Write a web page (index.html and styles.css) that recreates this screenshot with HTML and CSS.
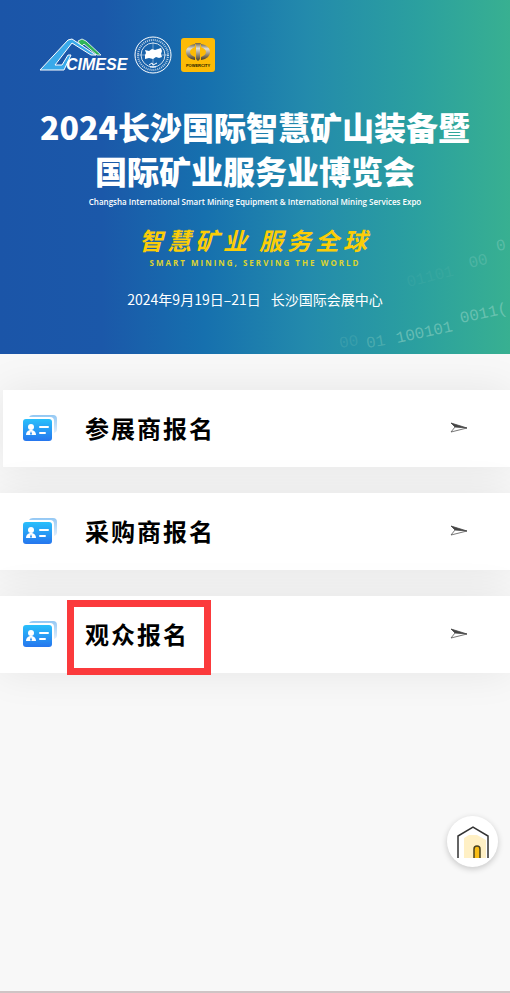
FILE: index.html
```
<!DOCTYPE html>
<html lang="zh-CN">
<head>
  <meta charset="UTF-8">
  <meta name="viewport" content="width=device-width, initial-scale=1.0">
  <title>2024长沙国际智慧矿山装备暨国际矿业服务业博览会</title>
  <link rel="stylesheet" href="styles.css">
</head>
<body>
  <header class="banner">
    <svg class="binary" viewBox="0 0 200 140" aria-hidden="true">
      <text transform="translate(30 134) rotate(-9)" opacity=".3">00</text>
      <text transform="translate(57 134) rotate(-9)" opacity=".6">01</text>
      <text transform="translate(87 129) rotate(-12)">100101</text>
      <text transform="translate(151 109) rotate(-12)">0011(</text>
      <text transform="translate(98 73) rotate(-14)" opacity=".15">01101</text>
      <text transform="translate(160 54) rotate(-14)" opacity=".5">00</text>
      <text transform="translate(187 37) rotate(-10)" opacity=".7">0</text>
    </svg>

    <div class="logos">
      <svg class="logo-cimese" viewBox="0 0 90 36" role="img" aria-label="CIMESE">
        <path d="M39 4l4-2 4 2 15 14h-4L45 7l-3 3z" fill="#2fb457" stroke="#fff" stroke-width=".8"/>
        <path d="M1 33L29 3l4-1 24 16h-5L33 6 16 28h7l6-10h3l-7 15z" fill="#39a9ea" stroke="#fff" stroke-width="1"/>
        <text x="27" y="33">CIMESE</text>
      </svg>
      <svg class="logo-seal" viewBox="0 0 38 38" role="img" aria-label="Seal">
        <g fill="none" stroke="#fff">
          <circle cx="19" cy="19" r="18" stroke-width="1"/>
          <circle cx="19" cy="19" r="15" stroke-width="2" stroke-dasharray="1 1" opacity=".7"/>
          <circle cx="19" cy="19" r="12" stroke-width=".8"/>
          <path d="M3 19h32M19 6v26" stroke-width=".6" opacity=".7"/>
          <path d="M15 29l3-2 1 2 4-2M16 31h6" stroke-width="1"/>
        </g>
        <path d="M11 14l4 1 3-2 3 1 6-2 1 3-1 3 1 3-3 1-3-1-3 2-4-1-4 1v-4l1-2z" fill="#fff"/>
      </svg>
      <svg class="logo-power" viewBox="0 0 34 34" role="img" aria-label="POWERCITY">
        <defs>
          <linearGradient id="metal" x2="0" y2="1">
            <stop offset="0" stop-color="#6b6350"/>
            <stop offset=".3" stop-color="#e4e0d4"/>
            <stop offset="1" stop-color="#4a3b20"/>
          </linearGradient>
        </defs>
        <rect width="34" height="34" rx="3" fill="#fdbb06"/>
        <path d="M14 6C8 7 5 10 5 14s3 7 9 8v-3c-3-1-5-3-5-5s2-4 5-5zM20 6c6 1 9 4 9 8s-3 7-9 8v-3c3-1 5-3 5-5s-2-4-5-5z" fill="url(#metal)"/>
        <path d="M14 5h6l-1 3v13l-2 2-2-2V8z" fill="url(#metal)"/>
        <text x="17" y="29" text-anchor="middle">POWERCITY</text>
      </svg>
    </div>

    <h1>2024长沙国际智慧矿山装备暨<br>国际矿业服务业博览会</h1>
    <p class="english">Changsha International Smart Mining Equipment &amp; International Mining Services Expo</p>
    <p class="slogan"><span>智慧矿业</span><span>服务全球</span></p>
    <p class="slogan-en">SMART MINING, SERVING THE WORLD</p>
    <p class="date"><span>2024年9月19日–21日</span><span>长沙国际会展中心</span></p>
  </header>

  <svg class="symbols" aria-hidden="true">
    <defs>
      <linearGradient id="card-blue" x2="0" y2="1">
        <stop offset="0" stop-color="#29c0fb"/>
        <stop offset="1" stop-color="#2676ee"/>
      </linearGradient>
      <linearGradient id="card-back" x2="0" y2="1">
        <stop offset="0" stop-color="#93c8f4"/>
        <stop offset="1" stop-color="#e4effc"/>
      </linearGradient>
    </defs>
    <symbol id="card" viewBox="0 0 34 26">
      <path d="M6 2q1-2 4-2h20q4 0 4 4v11q0 2-3 3V6q0-4-4-4z" fill="url(#card-back)"/>
      <rect y="4" width="29" height="22" rx="3" fill="url(#card-blue)"/>
      <circle cx="8" cy="12" r="3" fill="#fff"/>
      <path d="M3 20q0-4 4-5h2q4 1 4 5z" fill="#fff"/>
      <path d="M8 16l1 3-1 1-1-1z" fill="#278ff3"/>
      <path d="M17 12h8M17 18h5" stroke="#fff" stroke-width="2" stroke-linecap="round"/>
    </symbol>
    <symbol id="arrow" viewBox="0 0 18 12">
      <path d="M1 1l16 5-12-1z" fill="#444" stroke="#444" stroke-width=".8"/>
      <path d="M5 5L1 10l16-4" fill="none" stroke="#555" stroke-width=".8"/>
    </symbol>
  </svg>

  <nav class="menu">
    <a class="item first" href="#exhibitor">
      <svg class="card"><use href="#card"/></svg>
      <span class="label">参展商报名</span>
      <svg class="arrow"><use href="#arrow"/></svg>
    </a>
    <a class="item" href="#buyer">
      <svg class="card"><use href="#card"/></svg>
      <span class="label">采购商报名</span>
      <svg class="arrow"><use href="#arrow"/></svg>
    </a>
    <a class="item" href="#visitor">
      <svg class="card"><use href="#card"/></svg>
      <span class="label marked">观众报名</span>
      <svg class="arrow"><use href="#arrow"/></svg>
    </a>
  </nav>

  <a class="home" href="#home" aria-label="首页">
    <svg viewBox="0 0 34 34">
      <path d="M8 33V13l5-3h8l9 5v18z" fill="#fff0c5"/>
      <path d="M18 33v-9q0-3 3-3t3 3v9z" fill="#f9bd16"/>
      <path d="M18 33v-9q0-3 3-3t3 3v9" fill="none" stroke="#4a421f" stroke-width="1.500"/>
      <path d="M2 33V11l15-9 15 9v22" fill="none" stroke="#333" stroke-width="1.500"/>
    </svg>
  </a>
</body>
</html>
```
FILE: styles.css
```
* {
  box-sizing: border-box;
}
body {
  margin: 0;
  min-height: 100vh;
  background: #f8f8f8;
  border-bottom: 2px solid #cfc4c5;
  font-family: "Noto Sans CJK SC", sans-serif;
  color: #000;
}
h1, p {
  margin: 0;
}

/* banner */
.banner {
  position: relative;
  overflow: hidden;
  padding: 36px 0 45px;
  background: linear-gradient(90deg, #1b55a8 0%, #1b58a9 20%, #1670ae 40%, #238aac 60%, #2ba09f 82%, #38b091 100%);
  color: #fff;
  text-align: center;
}
.binary {
  position: absolute;
  right: 0;
  bottom: 0;
  width: 200px;
  height: 140px;
  fill: #8bd0c2;
  fill-opacity: .6;
  font-family: "Liberation Mono", monospace;
  font-size: 16px;
}
.logos {
  display: flex;
  align-items: center;
  gap: 5px;
  padding-left: 39px;
}
.logo-cimese {
  width: 90px;
  height: 36px;
}
.logo-cimese text {
  fill: #fff;
  font: italic bold 16px "Liberation Sans", sans-serif;
}
.logo-seal {
  width: 38px;
  height: 38px;
}
.logo-power {
  width: 34px;
  height: 34px;
  margin-left: 4px;
}
.logo-power text {
  fill: #241a00;
  font: bold 4px "Liberation Sans", sans-serif;
}
h1 {
  margin-top: 30px;
  font-size: 32px;
  line-height: 44px;
  font-weight: 900;
}
.english {
  margin-top: 4px;
  font: 600 8px/12px "Open Sans", sans-serif;
}
.slogan {
  display: flex;
  justify-content: center;
  gap: 8px;
  margin-top: 16px;
  color: #fccd07;
  font-size: 24px;
  line-height: 32px;
  font-style: italic;
  font-weight: bold;
  letter-spacing: 4px;
}
.slogan-en {
  margin-top: 1px;
  color: #dcd431;
  font: bold 8px/12px "Open Sans", sans-serif;
  letter-spacing: 2px;
}
.date {
  display: flex;
  justify-content: center;
  gap: 10px;
  margin-top: 20px;
  font-size: 14px;
  line-height: 20px;
}

/* menu */
.symbols {
  position: absolute;
  width: 0;
  height: 0;
}
.menu {
  display: flex;
  flex-direction: column;
  gap: 26px;
  padding-top: 36px;
}
.item {
  display: flex;
  align-items: center;
  height: 77px;
  padding: 0 42px 2px 23px;
  background: #fff;
  box-shadow: 0 0 40px rgba(0, 0, 0, .08);
  color: #000;
  text-decoration: none;
}
.item.first {
  margin-left: 3px;
  padding-left: 20px;
}
.card {
  width: 34px;
  height: 26px;
  margin-right: 28px;
}
.label {
  position: relative;
  flex: 1;
  font-size: 24px;
  line-height: 36px;
  font-weight: bold;
  letter-spacing: 2px;
}
.marked {
  flex: none;
  margin-right: auto;
}
.marked::after {
  content: "";
  position: absolute;
  inset: -16px -22px -23px -18px;
  border: 7px solid #fb3a3c;
}
.arrow {
  width: 18px;
  height: 12px;
}

.home {
  position: fixed;
  right: 12px;
  bottom: 126px;
  display: flex;
  align-items: center;
  justify-content: center;
  width: 51px;
  height: 51px;
  border-radius: 50%;
  background: #fff;
  box-shadow: 0 2px 6px rgba(0, 0, 0, .2);
}
.home svg {
  width: 34px;
  height: 34px;
}
```
